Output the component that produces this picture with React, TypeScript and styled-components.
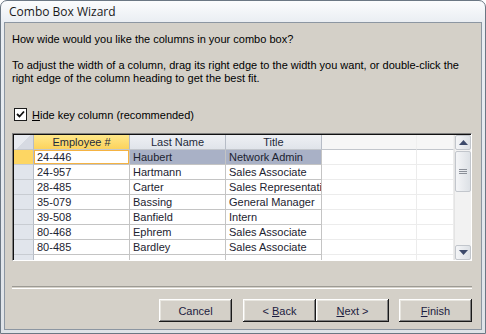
import React from "react";
import styled, { createGlobalStyle } from "styled-components";

interface Employee {
	id: string;
	lastName: string;
	title: string;
}

const employees: Employee[] = [
	{ id: "24-446", lastName: "Haubert", title: "Network Admin" },
	{ id: "24-957", lastName: "Hartmann", title: "Sales Associate" },
	{ id: "28-485", lastName: "Carter", title: "Sales Representative" },
	{ id: "35-079", lastName: "Bassing", title: "General Manager" },
	{ id: "39-508", lastName: "Banfield", title: "Intern" },
	{ id: "80-468", lastName: "Ephrem", title: "Sales Associate" },
	{ id: "80-485", lastName: "Bardley", title: "Sales Associate" },
	{ id: "", lastName: "", title: "" }
];

const GlobalStyle = createGlobalStyle`
	html, body {
		margin: 0;
		padding: 0;
		background: #fff;
	}
	body {
		font-family: "Liberation Sans", Arial, sans-serif;
		font-size: 11px;
		color: #000;
	}
`;

const Window = styled.div`
	width: 486px;
	height: 334px;
	box-sizing: border-box;
	display: flex;
	flex-direction: column;
	border: 1px solid #6b7784;
	border-radius: 7px 7px 0 0;
	background: linear-gradient(#fbfcfd 0, #e9edf2 22px, #dfe3e8 100%);
	overflow: hidden;
`;

const TitleBar = styled.div`
	height: 21px;
	flex: none;
	display: flex;
	align-items: center;
	padding-left: 8px;
	font-family: "Open Sans", "Noto Sans", sans-serif;
	font-size: 12px;
	color: #1a1a1a;
`;

const Client = styled.div`
	flex: 1;
	margin: 0 3px 3px 3px;
	border: 1px solid #8c96a2;
	background: #d4d0c8;
	display: flex;
	flex-direction: column;
	padding: 10px 9px 0 7px;
`;

const Para = styled.p<{ $gap?: number }>`
	margin: 0 0 ${(p) => p.$gap ?? 0}px 0;
	line-height: 13px;
`;

const CheckRow = styled.label`
	display: flex;
	align-items: center;
	gap: 5px;
	margin: 0 0 12px 2px;
	height: 13px;
`;

const CheckBox = styled.span`
	width: 11px;
	height: 11px;
	border: 1px solid #1c1c1c;
	background: #fff;
	display: flex;
	align-items: center;
	justify-content: center;
`;

const GridFrame = styled.div`
	height: 128px;
	display: flex;
	border-top: 1px solid #808080;
	border-left: 1px solid #808080;
	border-right: 1px solid #fff;
	border-bottom: 1px solid #fff;
	box-shadow: inset 1px 1px 0 #101010;
	padding: 1px 0 0 1px;
	box-sizing: border-box;
	background: #fff;
`;

const Sheet = styled.div`
	flex: 1;
	overflow: hidden;
	display: flex;
	flex-direction: column;
`;

const Row = styled.div`
	display: grid;
	grid-template-columns: 20px 96px 96px 96px 95px 1fr;
	height: 15px;
	flex: none;
`;

const HeadCell = styled.div<{ $active?: boolean; $empty?: boolean }>`
	box-sizing: border-box;
	display: flex;
	align-items: center;
	justify-content: center;
	border-right: 1px solid ${(p) => (p.$empty ? "#efefef" : "#b6bcc6")};
	border-bottom: 1px solid #c2c6cc;
	color: #1e2a3a;
	white-space: nowrap;
	overflow: hidden;
	background: ${(p) =>
		p.$active
			? "linear-gradient(#ffe88a, #fcd35c)"
			: p.$empty
			? "#f6f6f6"
			: "linear-gradient(#eef0f4, #e0e4ea)"};
`;

const Corner = styled(HeadCell)`
	background: linear-gradient(135deg, #e8ebf0 0, #e8ebf0 50%, #d6dae2 50%);
`;

const Selector = styled.div<{ $active?: boolean }>`
	box-sizing: border-box;
	border-right: 1px solid #b6bcc6;
	border-bottom: 1px solid #c8ccd2;
	background: ${(p) => (p.$active ? "#fdd663" : "#e1e5ec")};
`;

const Cell = styled.div<{ $selected?: boolean; $current?: boolean; $empty?: boolean }>`
	box-sizing: border-box;
	padding-left: 3px;
	display: flex;
	align-items: center;
	white-space: nowrap;
	overflow: hidden;
	color: #1c2330;
	border-right: 1px solid ${(p) => (p.$empty ? "#ececec" : "#c4c4c4")};
	border-bottom: 1px solid ${(p) => (p.$empty ? "#ececec" : "#c4c4c4")};
	background: ${(p) => (p.$selected ? "#a9b1c6" : "#fff")};
	${(p) => p.$current && "box-shadow: inset 0 0 0 1px #f5b342;"}
`;

const ScrollBar = styled.div`
	width: 16px;
	flex: none;
	display: flex;
	flex-direction: column;
	background: #f2f2f2;
	border-left: 1px solid #e4e4e4;
`;

const ScrollButton = styled.div`
	height: 15px;
	flex: none;
	box-sizing: border-box;
	border: 1px solid #c2c6cc;
	border-radius: 2px;
	background: linear-gradient(90deg, #f4f5f7, #dde1e6);
	display: flex;
	align-items: center;
	justify-content: center;
`;

const Thumb = styled(ScrollButton)`
	height: 41px;
	margin-top: 1px;
`;

const Track = styled.div`
	flex: 1;
`;

const Separator = styled.div`
	margin-top: 25px;
	height: 1px;
	border-top: 1px solid #9c9a94;
	border-bottom: 1px solid #fff;
`;

const Buttons = styled.div`
	display: flex;
	justify-content: flex-end;
	margin-top: 10px;
`;

const Button = styled.button<{ $gap?: number }>`
	width: 73px;
	height: 23px;
	margin-left: ${(p) => p.$gap ?? 0}px;
	padding: 0;
	font-family: "Liberation Sans", Arial, sans-serif;
	font-size: 11px;
	color: #1c1c40;
	background: #d4d0c8;
	border: none;
	box-shadow: inset -1px -1px 0 #1a1a1a, inset 1px 1px 0 #fff,
		inset -2px -2px 0 #808080, inset 2px 2px 0 #e8e6e0;
`;

const Key = styled.span`
	text-decoration: underline;
`;

const columns = ["Employee #", "Last Name", "Title"];

const Triangle: React.FC<{ down?: boolean }> = ({ down }) => (
	<svg width="9" height="5" viewBox="0 0 9 5">
		<path d={down ? "M0 0H9L4.5 5Z" : "M0 5H9L4.5 0Z"} fill="#3d4a6b" />
	</svg>
);

const App: React.FC = () => (
	<>
		<GlobalStyle />
		<Window>
			<TitleBar>Combo Box Wizard</TitleBar>
			<Client>
				<Para $gap={13}>How wide would you like the columns in your combo box?</Para>
				<Para $gap={23}>
					To adjust the width of a column, drag its right edge to the width you want, or
					double-click the right edge of the column heading to get the best fit.
				</Para>
				<CheckRow>
					<CheckBox>
						<svg width="9" height="9" viewBox="0 0 9 9">
							<path d="M1 4L3.5 6.5L8 1.5" stroke="#111" strokeWidth="1.8" fill="none" />
						</svg>
					</CheckBox>
					<span>
						<Key>H</Key>ide key column (recommended)
					</span>
				</CheckRow>
				<GridFrame>
					<Sheet>
						<Row>
							<Corner />
							{columns.map((c, i) => (
								<HeadCell key={c} $active={i === 0}>
									{c}
								</HeadCell>
							))}
							<HeadCell $empty />
							<HeadCell $empty />
						</Row>
						{employees.map((e, r) => (
							<Row key={r}>
								<Selector $active={r === 0} />
								<Cell $current={r === 0}>{e.id}</Cell>
								<Cell $selected={r === 0}>{e.lastName}</Cell>
								<Cell $selected={r === 0}>{e.title}</Cell>
								<Cell $empty />
								<Cell $empty />
							</Row>
						))}
					</Sheet>
					<ScrollBar>
						<ScrollButton>
							<Triangle />
						</ScrollButton>
						<Thumb>
							<svg width="8" height="6" viewBox="0 0 8 6">
								<path d="M0 .5H8M0 2.5H8M0 4.5H8" stroke="#8a8f98" strokeWidth="1" />
							</svg>
						</Thumb>
						<Track />
						<ScrollButton>
							<Triangle down />
						</ScrollButton>
					</ScrollBar>
				</GridFrame>
				<Separator />
				<Buttons>
					<Button>Cancel</Button>
					<Button $gap={11}>
						&lt; <Key>B</Key>ack
					</Button>
					<Button>
						<Key>N</Key>ext &gt;
					</Button>
					<Button $gap={10}>
						<Key>F</Key>inish
					</Button>
				</Buttons>
			</Client>
		</Window>
	</>
);

export default App;
